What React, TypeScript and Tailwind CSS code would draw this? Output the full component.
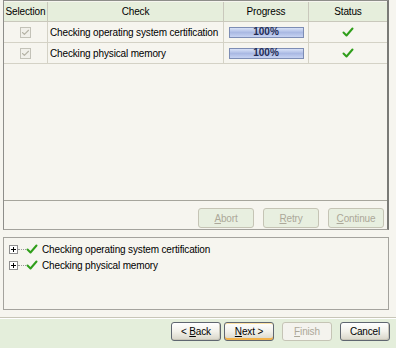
import { Check } from 'lucide-react'

const font = { fontFamily: '"Liberation Sans", Arial, sans-serif' }

function GreenCheck({ size = 12 }: { size?: number }) {
  return (
    <svg width={size} height={size} viewBox="0 0 12 12">
      <path d="M1.5 6.5 L4.5 9.5 L10.5 2.5" fill="none" stroke="#2f9e1a" strokeWidth="2" strokeLinecap="round" strokeLinejoin="round" />
    </svg>
  )
}

function Progress() {
  return (
    <div className="mx-auto h-[11px] w-[75px] border border-[#7d8db5] bg-gradient-to-b from-[#d9e2f7] via-[#aab9e3] to-[#c7d3f2] flex items-center justify-center text-[10px] font-bold text-[#1f2c55] leading-none tracking-normal">
      100%
    </div>
  )
}

function Row({ label }: { label: string }) {
  return (
    <div className="grid grid-cols-[44px_176px_85px_78px] h-[21px] border-b border-[#d4d2c6]">
      <div className="flex items-center justify-center border-r border-[#d4d2c6]">
        <div className="w-[11px] h-[11px] border border-[#c3c2b8] bg-[#f1f0ea] flex items-center justify-center">
          <Check className="w-[9px] h-[9px] text-[#b5b3a6]" strokeWidth={3} />
        </div>
      </div>
      <div className="flex items-center pl-[2px] border-r border-[#d4d2c6] text-[10px] text-black whitespace-nowrap overflow-hidden">{label}</div>
      <div className="flex items-center border-r border-[#d4d2c6]"><Progress /></div>
      <div className="flex items-center justify-center"><GreenCheck /></div>
    </div>
  )
}

function Btn({ children, disabled, def, className = '' }: { children: React.ReactNode; disabled?: boolean; def?: boolean; className?: string }) {
  if (disabled) {
    return (
      <button className={`w-[50px] h-[19px] rounded-[3px] border border-[#c5c4b5] bg-[#f4f3ee] text-[10px] text-[#aca899] ${className}`}>
        {children}
      </button>
    )
  }
  return (
    <button className={`w-[50px] h-[19px] rounded-[3px] border border-[#5f6670] bg-gradient-to-b from-[#ffffff] via-[#f2f1ea] to-[#d8d5c8] text-[10px] text-black ${def ? 'shadow-[inset_0_-2px_0_#f2b24a,inset_0_1px_0_#fde3a5]' : 'shadow-[inset_-1px_-1px_0_#c9c6b8]'} ${className}`}>
      {children}
    </button>
  )
}

export default function App() {
  return (
    <div style={font} className="w-[396px] h-[348px] bg-[#f6f5ef] flex flex-col overflow-hidden tracking-[-0.15px]">
      {/* checks table */}
      <div className="ml-[3px] w-[386px] h-[230px] border-l border-t border-[#8e8e8a] border-r-2 border-b border-r-[#7a7a76] border-b-[#a3a29c] flex flex-col">
        <div className="h-[199px] mt-[1px] border-b border-[#a6a59c]">
          <div className="grid grid-cols-[44px_176px_85px_78px] h-[20px] bg-[#e6eedc] border-b border-[#c9c8bc] text-[10px] text-black">
            <div className="flex items-center justify-center border-r border-[#c9c8bc]">Selection</div>
            <div className="flex items-center justify-center border-r border-[#c9c8bc]">Check</div>
            <div className="flex items-center justify-center border-r border-[#c9c8bc]">Progress</div>
            <div className="flex items-center justify-center">Status</div>
          </div>
          <Row label="Checking operating system certification" />
          <Row label="Checking physical memory" />
        </div>
        <div className="flex justify-end gap-[9px] pr-[3px] pt-[7px]">
          {['Abort', 'Retry', 'Continue'].map((t) => (
            <button key={t} className="w-[56px] h-[20px] rounded-[3px] border border-[#c5c4b5] bg-[#e8efe0] text-[10px] text-[#aca899]">
              <span className="underline">{t[0]}</span>{t.slice(1)}
            </button>
          ))}
        </div>
      </div>

      {/* tree */}
      <div className="ml-[3px] mt-[7px] w-[386px] h-[73px] border border-[#a4a39d] bg-[#f6f5ef] pt-[3px] pl-[5px] text-[10px] text-black">
        {['Checking operating system certification', 'Checking physical memory'].map((t) => (
          <div key={t} className="flex items-center h-[16px]">
            <div className="w-[9px] h-[9px] border border-[#8f8f8f] bg-white flex items-center justify-center">
              <svg width="7" height="7" viewBox="0 0 7 7"><path d="M1 3.5 H6 M3.5 1 V6" stroke="#000" strokeWidth="1" /></svg>
            </div>
            <div className="w-[8px] border-t border-dotted border-[#999]" />
            <GreenCheck size={12} />
            <span className="ml-[4px] whitespace-nowrap">{t}</span>
          </div>
        ))}
      </div>

      {/* footer */}
      <div className="mt-[7px] h-[2px] border-t border-[#c8c6b8] bg-white" />
      <div className="flex-1 bg-[#e4eedb] flex justify-end items-start pt-[3px] pr-[6px]">
        <Btn>&lt; <span className="underline">B</span>ack</Btn>
        <Btn def className="ml-[3px]"><span className="underline">N</span>ext &gt;</Btn>
        <Btn disabled className="ml-[8px]"><span className="underline">F</span>inish</Btn>
        <Btn className="ml-[8px]">Cancel</Btn>
      </div>
    </div>
  )
}
